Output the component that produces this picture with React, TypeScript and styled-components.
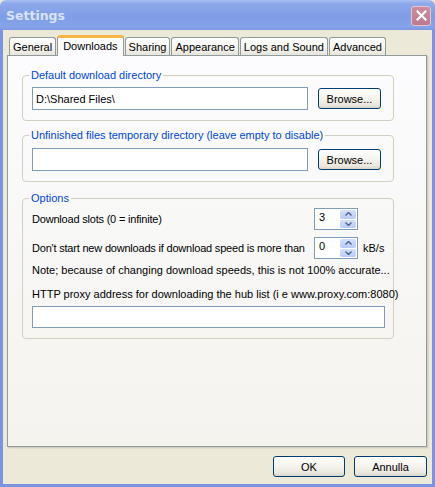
import styled, { createGlobalStyle } from "styled-components";

const GlobalStyle = createGlobalStyle`
  html, body {
    margin: 0;
    padding: 0;
    background: #ece9d8;
  }
  * {
    box-sizing: border-box;
  }
`;

const Window = styled.div`
  width: 435px;
  height: 487px;
  display: flex;
  flex-direction: column;
  font-family: "Liberation Sans", Arial, sans-serif;
  font-size: 11px;
  color: #000;
`;

const TitleBar = styled.div`
  height: 30px;
  display: flex;
  align-items: center;
  justify-content: space-between;
  padding: 0 4px 0 6px;
  background: linear-gradient(#aabff2 0%, #8ea9eb 12%, #7f9de6 55%, #86a3ea 90%, #7d97e2 100%);
  border-radius: 6px 6px 0 0;
`;

const Title = styled.span`
  font-family: "DejaVu Sans", "Liberation Sans", sans-serif;
  font-weight: bold;
  font-size: 12.5px;
  color: #d8e2f8;
`;

const CloseButton = styled.div`
  width: 20px;
  height: 20px;
  margin-top: 1px;
  border: 1px solid #e6c3cd;
  border-radius: 3px;
  background: linear-gradient(#cb8e9e, #bd7a8c);
  display: flex;
  align-items: center;
  justify-content: center;
`;

const Frame = styled.div`
  flex: 1;
  display: flex;
  flex-direction: column;
  background: #ece9d8;
  border: 3px solid #7b93e0;
  border-top: none;
  padding: 5px 5px 0 4px;
`;

const TabStrip = styled.div`
  display: flex;
  align-items: flex-end;
  gap: 1px;
  height: 21px;
  margin: 0 0 -1px 2px;
  position: relative;
  z-index: 1;
`;

const Tab = styled.div<{ $active?: boolean }>`
  height: ${({ $active }) => ($active ? "21px" : "18px")};
  margin-bottom: ${({ $active }) => ($active ? "0" : "1px")};
  padding: ${({ $active }) => ($active ? "0 5px 3px" : "1px 3px 0")};
  display: flex;
  align-items: center;
  border: 1px solid #919b9c;
  border-bottom: none;
  border-radius: 3px 3px 0 0;
  white-space: nowrap;
  background: ${({ $active }) =>
    $active ? "#fcfcfe" : "linear-gradient(#ffffff 0%, #f3f3ef 60%, #e6e5dc 100%)"};
  border-top: ${({ $active }) => ($active ? "3px solid #f7b548" : "1px solid #919b9c")};
`;

const Panel = styled.div`
  height: 392px;
  border: 1px solid #919b9c;
  box-shadow: 1px 1px 0 #d0cec0, 2px 2px 0 #e0ddd0;
  background: linear-gradient(#fcfcfe, #f4f3ee);
  padding: 13px 0 0 14px;
`;

const Group = styled.fieldset<{ $top: number; $pt: number }>`
  width: 372px;
  margin: ${({ $top }) => $top}px 0 0 0;
  padding: ${({ $pt }) => $pt}px 9px 10px 9px;
  border: 1px solid #d0d0bf;
  border-radius: 4px;
  min-width: 0;
`;

const Legend = styled.legend`
  color: #0046d5;
  line-height: 13px;
  padding: 0 2px;
  margin-left: -3px;
`;

const FieldRow = styled.div`
  display: flex;
  align-items: center;
  gap: 10px;
`;

const Edit = styled.div<{ $w: number; $h?: number }>`
  width: ${({ $w }) => $w}px;
  height: ${({ $h }) => $h ?? 23}px;
  border: 1px solid #7f9db9;
  background: #fff;
  padding: 0 3px;
  display: flex;
  align-items: center;
`;

const Button = styled.div<{ $w: number; $h?: number }>`
  width: ${({ $w }) => $w}px;
  height: ${({ $h }) => $h ?? 21}px;
  border: 1px solid #003c74;
  border-radius: 3px;
  background: linear-gradient(#ffffff 0%, #f5f4ef 45%, #e9e7dd 85%, #d8d4c8 100%);
  display: flex;
  align-items: center;
  justify-content: center;
`;

const OptionRow = styled.div<{ $mt?: number }>`
  display: grid;
  grid-template-columns: 1fr 44px 26px;
  align-items: center;
  margin-top: ${({ $mt }) => $mt ?? 0}px;
`;

const OptionLabel = styled.span`
  white-space: nowrap;
  letter-spacing: -0.2px;
`;

const Unit = styled.span`
  padding-left: 5px;
  white-space: nowrap;
`;

const TextLine = styled.div<{ $mt: number }>`
  margin-top: ${({ $mt }) => $mt}px;
  line-height: 13px;
  white-space: nowrap;
`;

const Spinner = styled.div<{ $h: number }>`
  height: ${({ $h }) => $h}px;
  border: 1px solid #7f9db9;
  background: #fff;
  display: flex;
  align-items: stretch;
`;

const SpinValue = styled.span`
  flex: 1;
  padding: 2px 0 0 4px;
`;

const SpinButtons = styled.div`
  width: 17px;
  display: flex;
  flex-direction: column;
  gap: 1px;
  padding: 1px 1px 1px 0;
`;

const SpinButton = styled.div`
  flex: 1;
  border-radius: 2px;
  background: linear-gradient(#d4e0fb, #b9cbf6);
  display: flex;
  align-items: center;
  justify-content: center;
`;

const Footer = styled.div`
  display: flex;
  justify-content: flex-end;
  gap: 9px;
  padding: 9px 0 0 0;
`;

const Arrow = ({ up }: { up?: boolean }) => (
  <svg width="7" height="4" viewBox="0 0 7 4">
    <path d={up ? "M0.5 3.5 L3.5 0.5 L6.5 3.5" : "M0.5 0.5 L3.5 3.5 L6.5 0.5"} fill="none" stroke="#4d6185" strokeWidth="1.4" />
  </svg>
);

const Spin = ({ value, h }: { value: string; h: number }) => (
  <Spinner $h={h}>
    <SpinValue>{value}</SpinValue>
    <SpinButtons>
      <SpinButton>
        <Arrow up />
      </SpinButton>
      <SpinButton>
        <Arrow />
      </SpinButton>
    </SpinButtons>
  </Spinner>
);

const tabs = ["General", "Downloads", "Sharing", "Appearance", "Logs and Sound", "Advanced"];

export default function App() {
  return (
    <>
      <GlobalStyle />
      <Window>
        <TitleBar>
          <Title>Settings</Title>
          <CloseButton>
            <svg width="11" height="11" viewBox="0 0 11 11">
              <path d="M1.5 1.5 L9.5 9.5 M9.5 1.5 L1.5 9.5" stroke="#fff" strokeWidth="2.2" strokeLinecap="square" />
            </svg>
          </CloseButton>
        </TitleBar>
        <Frame>
          <TabStrip>
            {tabs.map((t) => (
              <Tab key={t} $active={t === "Downloads"}>
                {t}
              </Tab>
            ))}
          </TabStrip>
          <Panel>
            <Group $top={0} $pt={5}>
              <Legend>Default download directory</Legend>
              <FieldRow>
                <Edit $w={276}>D:\Shared Files\</Edit>
                <Button $w={63}>Browse...</Button>
              </FieldRow>
            </Group>
            <Group $top={8} $pt={6}>
              <Legend>Unfinished files temporary directory (leave empty to disable)</Legend>
              <FieldRow>
                <Edit $w={276} />
                <Button $w={63}>Browse...</Button>
              </FieldRow>
            </Group>
            <Group $top={10} $pt={3}>
              <Legend>Options</Legend>
              <OptionRow>
                <OptionLabel>Download slots (0 = infinite)</OptionLabel>
                <Spin value="3" h={22} />
                <span />
              </OptionRow>
              <OptionRow $mt={7}>
                <OptionLabel>Don't start new downloads if download speed is more than</OptionLabel>
                <Spin value="0" h={22} />
                <Unit>kB/s</Unit>
              </OptionRow>
              <TextLine $mt={5}>Note; because of changing download speeds, this is not 100% accurate...</TextLine>
              <TextLine $mt={11}>HTTP proxy address for downloading the hub list (i e www.proxy.com:8080)</TextLine>
              <Edit $w={353} $h={22} style={{ marginTop: 5 }} />
            </Group>
          </Panel>
          <Footer>
            <Button $w={72}>OK</Button>
            <Button $w={73}>Annulla</Button>
          </Footer>
        </Frame>
      </Window>
    </>
  );
}
